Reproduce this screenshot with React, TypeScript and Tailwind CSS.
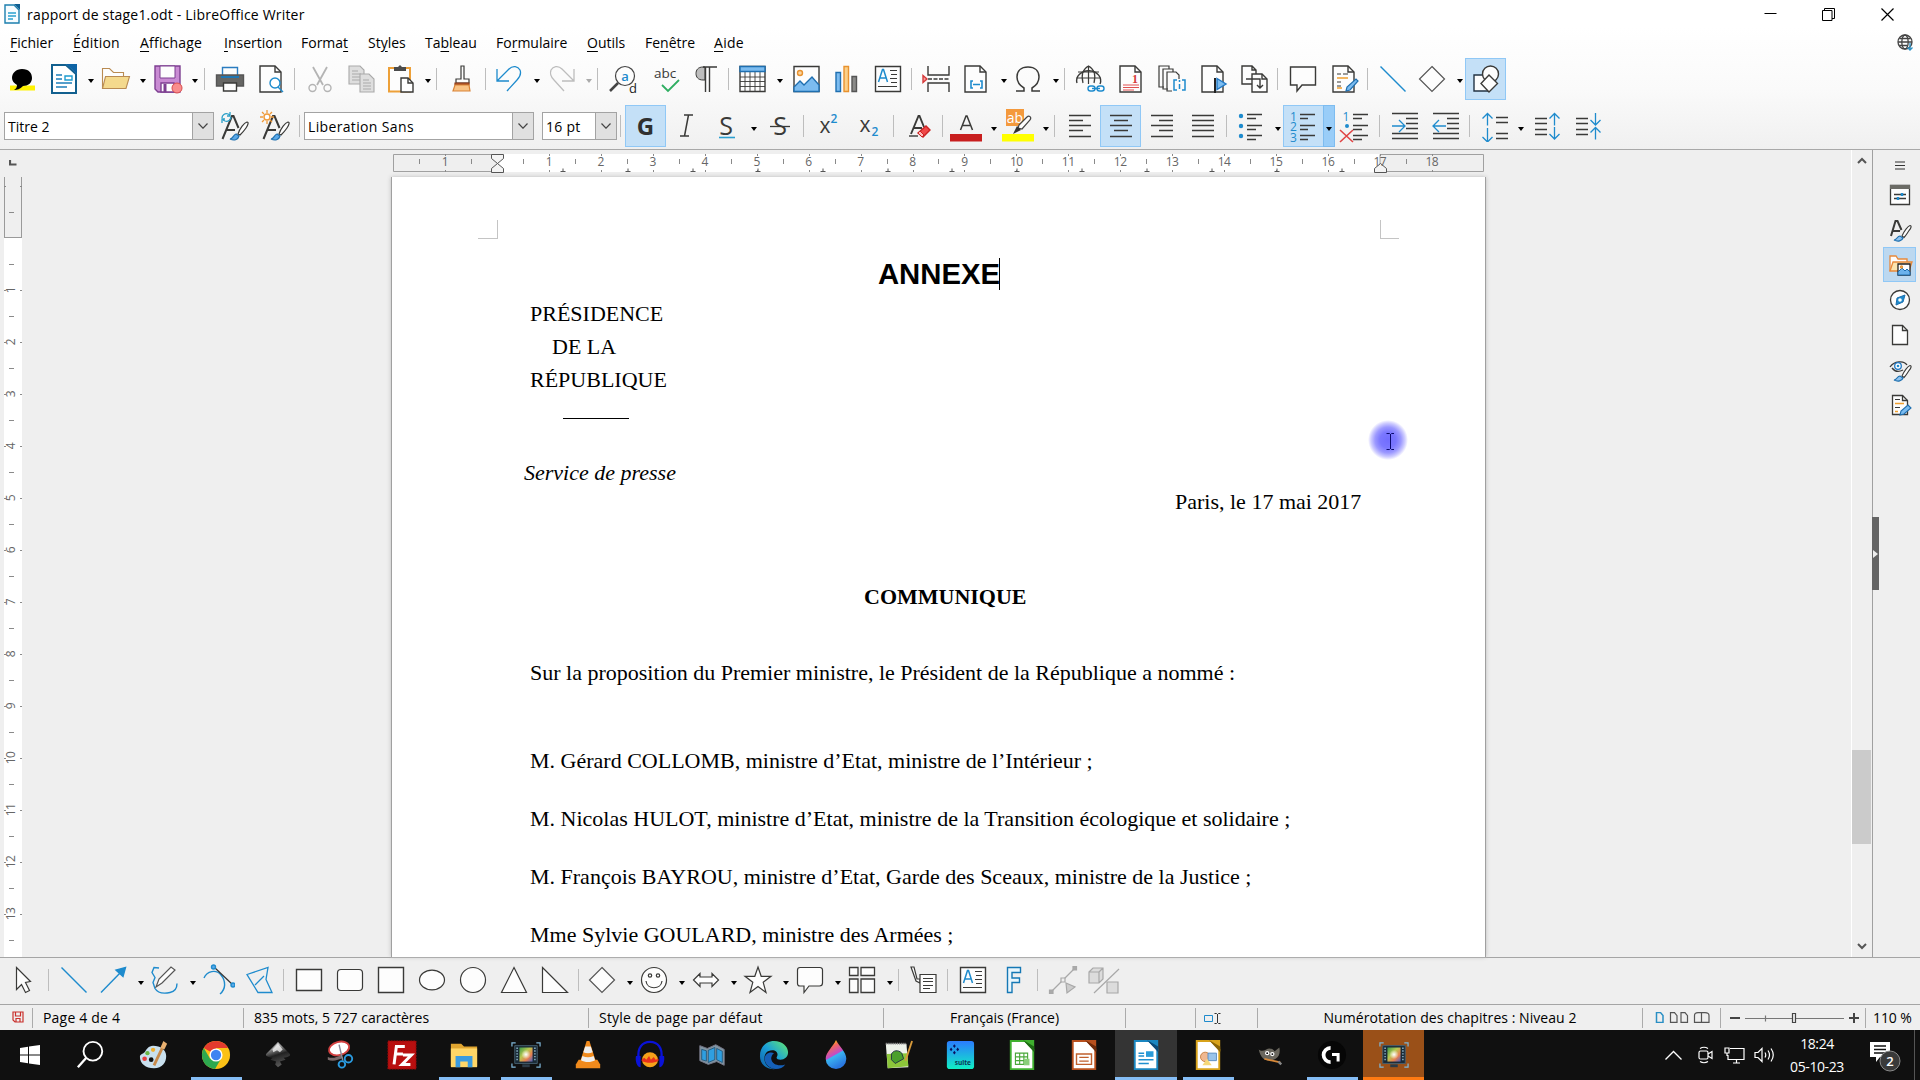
import React from "react";

type Kids = { children?: React.ReactNode };

const D = "#3a3a38";
const B = "#1e8bcd";
const G = "#b4b4b4";

function Ic({ children, c = D, w = 1.4, f = "none" }: Kids & { c?: string; w?: number; f?: string }) {
  return (
    <svg className="h-8 w-8 shrink-0" viewBox="0 0 32 32" fill={f} stroke={c} strokeWidth={w}>
      {children}
    </svg>
  );
}

/* `split` marks a button that is followed by its own dropdown arrow. */
function Btn({ children, on, split }: Kids & { on?: boolean; split?: boolean }) {
  return (
    <div
      className={
        on
          ? "flex h-[42px] w-[41px] shrink-0 items-center justify-center border border-[#90c8f6] bg-[#c4e0f7]"
          : split
            ? "flex h-[42px] w-[41px] shrink-0 items-center justify-center pr-[3px]"
            : "flex h-[42px] w-[41px] shrink-0 items-center justify-center"
      }
    >
      {children}
    </div>
  );
}

function Arr({ c = "#000", on }: { c?: string; on?: boolean }) {
  return (
    <div
      className={
        on
          ? "-ml-px flex h-[42px] w-[12px] shrink-0 items-center justify-center border border-[#7dbcf0] bg-[#99cdf8] pt-[5px]"
          : "flex h-[42px] w-[11px] shrink-0 items-center justify-center pt-[5px]"
      }
    >
      <svg className="h-[4px] w-[6px] shrink-0" viewBox="0 0 6 4">
        <path d="M0 0h6L3 4z" fill={c} />
      </svg>
    </div>
  );
}

function Sep({ wide }: { wide?: boolean }) {
  return (
    <div className={wide ? "flex w-[9px] shrink-0 justify-center" : "flex w-2 shrink-0 justify-center pr-px"}>
      <div className="h-[22px] w-px bg-[#bdbdbd]" />
    </div>
  );
}

/* ---------- shared icons ---------- */

const Sheet = ({ c = D }: { c?: string }) => (
  <>
    <path d="M5 3h15l6 6v20H5z" fill="#fdfdfd" stroke={c} />
    <path d="M20 3v6h6" stroke={c} fill="none" />
  </>
);

const BrushTip = () => (
  <>
    <path d="M18 22c2-5 6-10 8-10.500 2 0 1 3-1 5-2 3-3 5-5 7z" fill="#fdfdfd" stroke={D} strokeWidth={1.1} />
    <path d="M10 26c3 0 3-4 6-4l3 2c-1 3-5 4-9 2z" fill="#8fc3f0" stroke="#1d6fae" strokeWidth={1.2} />
  </>
);

const TextBoxIcon = () => (
  <Ic>
    <path d="M3.500 3.500h25v25h-25z" fill="#fdfdfd" />
    <path d="M6.500 19 10.500 6.500h1l4 12.500M8 15h6" stroke={B} strokeWidth={1.5} />
    <path d="M18 7.500h7M19 11.500h6M18 15.500h7M19 19.500h6M6 23.500h19" strokeWidth={1} />
  </Ic>
);

const DiamondIcon = () => (
  <Ic c="#555" w={1.2}>
    <path d="M16 3.500l12.500 12.500L16 28.500 3.500 16z" fill="#fdfdfd" />
  </Ic>
);

const LineIcon = () => (
  <Ic c={B} w={1.4}>
    <path d="M3.500 3.500l25 25" />
  </Ic>
);

/* ---------- title and menu ---------- */

function TitleBar() {
  return (
    <div className="flex h-[28px] items-center pl-1">
      <svg className="h-[20px] w-4" viewBox="0 0 16 20" fill="none" stroke="#1c7fae" strokeWidth={1.4}>
        <path d="M1 1h9l5 5v13H1z" fill="#f6fcff" />
        <path d="M10 0h6v6z" fill="#0e5f92" stroke="none" />
        <path d="M4 9h8M4 12h8M4 15h5" stroke="#2aa0d0" />
      </svg>
      <span className="ml-[7px] w-[500px] pt-px text-[14px] leading-5 tracking-[0.19px] text-black">rapport de stage1.odt - LibreOffice Writer</span>
      <div className="ml-auto flex items-center pr-[26px]">
        <svg className="mr-[45px] h-3 w-[13px]" viewBox="0 0 13 12" stroke="#000">
          <path d="M.5 5.500h12" />
        </svg>
        <svg className="mr-[46px] h-[13px] w-[13px]" viewBox="0 0 13 13" stroke="#000" fill="none">
          <path d="M.5 2.500h9.500v10H.5zM2.500 2.500v-2h10v10h-2.500" />
        </svg>
        <svg className="h-[13px] w-[13px]" viewBox="0 0 13 13" stroke="#000" strokeWidth={1.2}>
          <path d="M.5.5l12 12M12.500.5l-12 12" />
        </svg>
      </div>
    </div>
  );
}

function M({ a = "", u, b, cls }: { a?: string; u: string; b: string; cls: string }) {
  return (
    <span className={`${cls} shrink-0 whitespace-nowrap`}>
      {a}
      <span className="underline underline-offset-[3px]">{u}</span>
      {b}
    </span>
  );
}

function MenuBar() {
  return (
    <div className="flex h-[29px] items-center pl-[10px] text-[14px] leading-5 text-black">
      <M u="F" b="ichier" cls="w-[63px]" />
      <M u="É" b="dition" cls="w-[67px] tracking-[0.2px]" />
      <M u="A" b="ffichage" cls="w-[84px] tracking-[0.2px]" />
      <M u="I" b="nsertion" cls="w-[77px]" />
      <M a="Forma" u="t" b="" cls="w-[67px]" />
      <M a="St" u="y" b="les" cls="w-[57px]" />
      <M a="Ta" u="b" b="leau" cls="w-[71px]" />
      <M a="Fo" u="r" b="mulaire" cls="w-[91px]" />
      <M u="O" b="utils" cls="w-[58px]" />
      <M a="Fe" u="n" b="être" cls="w-[69px]" />
      <M u="A" b="ide" cls="w-[60px] tracking-[0.3px]" />
      <svg className="ml-auto mr-[6px] h-[17px] w-[17px]" viewBox="0 0 17 17" fill="none" stroke="#444" strokeWidth={1.3}>
        <circle cx="8" cy="8" r="7" />
        <ellipse cx="8" cy="8" rx="3.200" ry="7" />
        <path d="M1 8h14M2.500 4.500h11M2.500 11.500h8" />
        <path d="M13 9v7M10.500 13.500 13 16l2.500-2.500" stroke="#2a8fc4" />
      </svg>
    </div>
  );
}

/* ---------- standard toolbar ---------- */

function StandardBar() {
  return (
    <div className="flex h-[46px] items-center pl-px pb-[3px]">
      <Btn>
        <svg className="h-8 w-8" viewBox="0 0 32 32">
          <path d="M4 22.500h25v5H4z" fill="#fff200" />
          <path d="M16 6c7 0 10 4 10 9s-4 8-9 8c-3 3-6 4-9 4 2-1 3-3 3-5-3-2-5-4-5-7 0-5 4-9 10-9z" fill="#000" />
        </svg>
      </Btn>
      <div className="w-[2px]" />
      <Btn split>
        <Ic c="#12608f" w={2}>
          <path d="M5 2h14l10 9v19H5z" fill="#fff" />
          <path d="M19 1h11v10z" fill="#0d63a5" stroke="none" />
          <path d="M9 12h6M9 16h6M9 20h16M9 24h11" stroke="#1d7fbb" strokeWidth={1.5} />
          <path d="M18 13h7v4h-7z" stroke="#1d9cd0" strokeWidth={1.400} />
        </Ic>
      </Btn>
      <Arr />
      <Btn split>
        <Ic c="#b98b52" w={1.1}>
          <path d="M3.500 25V5.500h7l4 4h10V14" fill="#fdfdfd" />
          <path d="M6.500 13.500h24L27 25.500H3.500z" fill="#f4d98d" />
        </Ic>
      </Btn>
      <Arr />
      <Btn split>
        <Ic c="#7d3f91">
          <path d="M4 3h25v26H7l-3-3z" fill="#c98bd3" />
          <path d="M9 3h15v12H9z" fill="#fdfdfd" strokeWidth={1} />
          <path d="M10 20h13v9H10z" fill="#fdfdfd" />
          <path d="M14 21v8" strokeWidth={3} />
          <circle cx="26" cy="25" r="5" fill="#fa8d8d" stroke="#d84c4c" strokeWidth={1} />
        </Ic>
      </Btn>
      <Arr />
      <Sep wide />
      <Btn>
        <Ic>
          <path d="M8.500 12V4.500h15V12" fill="#fdfdfd" stroke="#2a7cc0" />
          <path d="M2.500 12h27v11h-27z" fill="#666664" stroke="#555" />
          <path d="M9.500 20h13v8h-13z" fill="#fdfdfd" />
          <path d="M7 14h18" stroke="#1f77b4" strokeWidth={2} />
        </Ic>
      </Btn>
      <Btn>
        <Ic>
          <Sheet />
          <circle cx="20" cy="20" r="5" stroke={B} fill="#fff" />
          <path d="M23 24l5 5" stroke={B} />
        </Ic>
      </Btn>
      <Sep />
      <Btn>
        <Ic c={G}>
          <path d="M9 4l10 18M23 4 13 22" strokeWidth={1.800} />
          <circle cx="8.500" cy="25" r="3.500" />
          <circle cx="23.500" cy="25" r="3.500" />
        </Ic>
      </Btn>
      <Btn>
        <Ic c="#a9a9a9" w={1.1}>
          <path d="M4 3h11l4 4v14H4z" fill="#dedede" />
          <path d="M7 8h6M7 11h9M7 14h9M7 17h9" />
          <path d="M15 11h9l5 5v13H15z" fill="#dedede" />
          <path d="M18 17h6M18 20h8M18 23h8M18 26h8" />
        </Ic>
      </Btn>
      <Btn split>
        <Ic>
          <path d="M5 5h21v23.500H5z" fill="#fdfdfd" stroke="#eda038" strokeWidth={2} />
          <path d="M10 4h4l2-2 2 2h4v4H10z" fill="#4b4b4b" stroke="none" />
          <path d="M17 15h7l5 5v9H17z" fill="#fff" />
          <path d="M24 15v5h5" />
        </Ic>
      </Btn>
      <Arr />
      <Sep />
      <Btn>
        <Ic w={1.2}>
          <path d="M15 3h3v13h5v4H10v-4h5z" fill="#fdfdfd" />
          <path d="M9 20h14v2H9z" fill="#b5562b" stroke="#8f3f1c" />
          <path d="M9 22h14l1 6H7z" fill="#f9c385" stroke="#d98336" />
        </Ic>
      </Btn>
      <Sep />
      <Btn split>
        <Ic c={B} w={1.3}>
          <path d="M4 6v12h12M4 18 16 6c4-4 9-2.500 11 1 1.500 4 0 7-3 10L14 28" />
        </Ic>
      </Btn>
      <Arr />
      <Btn split>
        <Ic c="#bdbdbd" w={1.3}>
          <path d="M29 6v12H17M29 18 17 6C13 2 8 3.500 6 7c-1.500 4 0 7 3 10l10 11" />
        </Ic>
      </Btn>
      <Arr c="#aaa" />
      <Sep />
      <Btn>
        <svg className="h-8 w-8 overflow-visible" viewBox="0 0 32 32" fill="none" stroke="#444" strokeWidth={1.5}>
          <circle cx="18" cy="13" r="9.500" fill="#fdfdfd" strokeWidth={1.200} />
          <path d="M11 20 3 28" strokeWidth={2.500} />
          <text x="18" y="17.500" textAnchor="middle" fontSize="13" fill={B} stroke="none" fontFamily="Open Sans" fontWeight="600">a</text>
          <text x="26" y="30" textAnchor="middle" fontSize="13" fill="#222" stroke="none" fontFamily="Open Sans">d</text>
        </svg>
      </Btn>
      <Btn>
        <svg className="h-8 w-8 overflow-visible" viewBox="0 0 32 32" fill="none">
          <text x="17" y="15" textAnchor="middle" fontSize="13.500" fill="#3a3a38" fontFamily="Open Sans">abc</text>
          <path d="M14 22l6 6L31 17" stroke="#2fae62" strokeWidth={1.800} />
        </svg>
      </Btn>
      <Btn>
        <Ic>
          <path d="M16 17h-2C9 17 7 14 7 10.500S9 4 14 4h2z" fill="#bdbdbd" strokeWidth={1} />
          <path d="M14 4h14M16.500 4v25M20.500 4v25" />
        </Ic>
      </Btn>
      <Sep />
      <Btn split>
        <Ic>
          <path d="M4 3.500h25v25H4z" fill="#fdfdfd" />
          <path d="M4 14h25M4 18.500h25M4 23.500h25M9 9v19M14 9v19M19 9v19M24 9v19" strokeWidth={0.9} />
          <path d="M4 3.500h25v5H4z" fill="#7cbcf0" stroke="#1f6fb0" />
        </Ic>
      </Btn>
      <Arr />
      <Btn>
        <Ic>
          <path d="M4 3.500h25v25H4z" fill="#fdfdfd" />
          <path d="M4 24l6-6 4 4 8-8 7 8v6.500H4z" fill="#7cbcf0" stroke="#1f6fb0" />
          <circle cx="10" cy="10" r="2.500" fill="#fbd5a0" stroke="#e8922f" />
        </Ic>
      </Btn>
      <Btn>
        <Ic>
          <path d="M5 9.500h4.500v19H5z" fill="#7cbcf0" stroke="#1f6fb0" />
          <path d="M13 3.500h4.500v25H13z" fill="#fbd08a" stroke="#e8922f" />
          <path d="M21 13.500h4.500v15H21z" fill="#8a8a88" stroke="#555" />
        </Ic>
      </Btn>
      <Btn>
        <TextBoxIcon />
      </Btn>
      <Sep />
      <Btn>
        <Ic>
          <path d="M7 3v9h21V3M7 29v-9h21v9" />
          <path d="M7 16h22" strokeDasharray="4 1.500" />
          <path d="M2 12.500l4 3.500-4 3.500z" fill="#f5a0a0" stroke="#d63a3a" />
        </Ic>
      </Btn>
      <Btn split>
        <Ic>
          <Sheet />
          <path d="M13 18h-2v7h2M20 18h2v7h-2M13 21.500h7" stroke={B} strokeWidth={1.600} />
        </Ic>
      </Btn>
      <Arr />
      <Btn split>
        <Ic w={1.500}>
          <path d="M4 28h8v-3C7 22 5 18 5 14 5 8 9 4 16 4s11 4 11 10c0 4-2 8-7 11v3h8" />
        </Ic>
      </Btn>
      <Arr />
      <Sep />
      <Btn>
        <Ic>
          <path d="M3 20a12 10 0 1 1 23 1" />
          <path d="M14.500 3v18M9 20C7 12 9 6 14.500 3 20 6 22 12 20 20M4 9h21M2.500 15h24" strokeWidth={1.200} />
          <rect x="14" y="23" width="7" height="5" rx="2.500" stroke={B} fill="#fdfdfd" />
          <rect x="23" y="23" width="7" height="5" rx="2.500" stroke={B} fill="#fdfdfd" />
          <path d="M18 25.500h8" stroke={B} />
        </Ic>
      </Btn>
      <Btn>
        <svg className="h-8 w-8 overflow-visible" viewBox="0 0 32 32" fill="none" stroke={D} strokeWidth={1.400}>
          <Sheet />
          <path d="M8 22h16M8 24.500h16M8 27h11" stroke="#e05050" strokeWidth={1} />
          <text x="20" y="20" textAnchor="middle" fontSize="12" fill="#d63a3a" stroke="none" fontFamily="Liberation Serif" fontWeight="700">1</text>
        </svg>
      </Btn>
      <Btn>
        <Ic w={1.200}>
          <path d="M8 24H3V3h10v3M12 26H7V6h10v3" />
          <path d="M16 28h-5V9h9l3 3v4" />
          <path d="M21 17h-3v10h3M26 17h3v10h-3M23.500 17v2M23.500 21v5" stroke={B} strokeWidth={1.500} />
        </Ic>
      </Btn>
      <Btn>
        <Ic>
          <Sheet />
          <path d="M18 15v15" strokeWidth={2} stroke="#222" />
          <path d="M20 15.500l9 5.500-9 5.500z" fill="#7cbcf0" stroke="#1f77c4" />
        </Ic>
      </Btn>
      <Btn>
        <Ic>
          <path d="M4 3h10l4 4v14H4zM14 3v4h4" fill="#fdfdfd" />
          <path d="M14 11h10l5 5v13H14z" fill="#fdfdfd" />
          <path d="M24 11v5h5" />
          <path d="M8 16h14v8M19 22l3 3 3-3" />
        </Ic>
      </Btn>
      <Sep />
      <Btn>
        <Ic>
          <path d="M3.500 4h25v18H15l-5 6v-6H3.500z" fill="#fdfdfd" />
        </Ic>
      </Btn>
      <Btn>
        <Ic>
          <Sheet />
          <path d="M9 11h4M15 11h5M9 19h4M9 23h4" strokeWidth={1.200} />
          <path d="M9 15h11M9 25h5" stroke="#f0a030" />
          <path d="M18 28l1-4 9-8 2 2-8 9z" fill="#7cbcf0" stroke="#1f6fb0" strokeWidth={1.200} />
        </Ic>
      </Btn>
      <Sep />
      <Btn>
        <LineIcon />
      </Btn>
      <Btn split>
        <DiamondIcon />
      </Btn>
      <Arr />
      <Btn on>
        <Ic>
          <path d="M4 12h15v16H4z" fill="#fdfdfd" stroke="#234" />
          <circle cx="20.500" cy="11" r="8" fill="#fdfdfd" />
          <path d="M19 12l8.500 8.500L19 29l-8-8.500z" fill="#fdfdfd" />
        </Ic>
      </Btn>
    </div>
  );
}

/* ---------- formatting toolbar ---------- */

function Combo({ text, cls }: { text: string; cls: string }) {
  return (
    <div className={`${cls} flex h-[28px] shrink-0 border border-[#a3a3a3] bg-white`}>
      <span className="flex-1 pl-[3px] text-[14px] leading-[27px] text-black">{text}</span>
      <div className="flex w-[21px] items-center justify-center border-l border-[#a3a3a3] bg-[#e0e0e0]">
        <svg className="h-[6px] w-[10px]" viewBox="0 0 10 6" fill="none" stroke="#444" strokeWidth={1.2}>
          <path d="M.5.5 5 5.200 9.500.5" />
        </svg>
      </div>
    </div>
  );
}

const StyleA = () => (
  <>
    <path d="M3.500 29 13 6h1.500l5 12M8 20h8" stroke={D} strokeWidth={2} fill="none" />
    <path d="M19 24c2-6 6-11 9-12 2 0 1 3-1 6-2 3-4 5-6 7z" fill="#fdfdfd" stroke={D} strokeWidth={1.200} />
    <path d="M11 29c3 0 3-4 6-5l3 2c-1 4-5 5-9 3z" fill="#5aa8e8" stroke="#1d6fae" strokeWidth={1.200} />
  </>
);

function FormatBar() {
  return (
    <div className="flex h-[46px] items-center pl-1">
      <Combo text="Titre 2" cls="w-[210px]" />
      <Btn>
        <Ic>
          <StyleA />
          <path d="M3 8c0-3 3-5 6-4l2 1M11 2v4H8M12 7c0 3-3 5-6 4l-2-1M3 13V9h3" stroke="#2a9fc8" strokeWidth={1.300} />
        </Ic>
      </Btn>
      <Btn>
        <Ic>
          <StyleA />
          <circle cx="7" cy="7" r="3" stroke="#ef9a38" fill="#fff" />
          <path d="M7 0v3M7 11v3M0 7h3M11 7h3M2 2l2 2M10 10l2 2M12 2l-2 2M4 10l-2 2" stroke="#ef9a38" strokeWidth={1.300} />
        </Ic>
      </Btn>
      <Sep />
      <Combo text="Liberation Sans" cls="w-[230px] tracking-[0.35px]" />
      <div className="w-2" />
      <Combo text="16 pt" cls="w-[75px] tracking-[0.25px]" />
      <Sep />
      <Btn on>
        <span className="font-['Open_Sans'] text-[24px] font-bold leading-8 text-[#303030]">G</span>
      </Btn>
      <Btn>
        <Ic w={1.500}>
          <path d="M13 5h9M9 26h9M17.500 5l-4 21" />
        </Ic>
      </Btn>
      <Btn split>
        <svg className="h-8 w-8 overflow-visible" viewBox="0 0 32 32">
          <text x="16" y="24.500" textAnchor="middle" fontSize="25" fill="#3a3a38" fontFamily="Open Sans">S</text>
          <path d="M9 27.500h16" stroke="#2a9fd0" strokeWidth={1.600} />
        </svg>
      </Btn>
      <Arr />
      <Btn>
        <svg className="h-8 w-8 overflow-visible" viewBox="0 0 32 32">
          <text x="16" y="25" textAnchor="middle" fontSize="25" fill="#3a3a38" fontFamily="Open Sans">S</text>
          <path d="M6 16.500h20" stroke="#3a3a38" strokeWidth={1.300} />
        </svg>
      </Btn>
      <Sep />
      <Btn>
        <svg className="h-8 w-8 overflow-visible" viewBox="0 0 32 32">
          <text x="12" y="23" textAnchor="middle" fontSize="21" fill="#3a3a38" fontFamily="Open Sans">x</text>
          <text x="21" y="13" textAnchor="middle" fontSize="12" fill={B} fontFamily="Open Sans" fontWeight="600">2</text>
        </svg>
      </Btn>
      <Btn>
        <svg className="h-8 w-8 overflow-visible" viewBox="0 0 32 32">
          <text x="11" y="22" textAnchor="middle" fontSize="21" fill="#3a3a38" fontFamily="Open Sans">x</text>
          <text x="21" y="26" textAnchor="middle" fontSize="12" fill={B} fontFamily="Open Sans" fontWeight="600">2</text>
        </svg>
      </Btn>
      <Sep />
      <Btn>
        <Ic>
          <path d="M8 24 15.500 6h1l4.500 11M11 18h8" strokeWidth={1.900} />
          <path d="M6 26h9" />
          <path d="M15 23l8-7 4 4-7 7z" fill="#f04848" stroke="#c22" />
          <path d="M15 23l2-2 4 4-2 2z" fill="#fbb" stroke="#c22" strokeWidth={1} />
        </Ic>
      </Btn>
      <Sep />
      <Btn split>
        <svg className="h-8 w-8" viewBox="0 0 32 32" fill="none">
          <path d="M10.500 20 16 6h1l5.500 14M12.500 15.500h8" stroke="#3a3a38" strokeWidth={1.500} />
          <path d="M0 24h32v7.500H0z" fill="#c81e1e" />
        </svg>
      </Btn>
      <Arr />
      <Btn split>
        <svg className="h-8 w-8 overflow-visible" viewBox="0 0 32 32" fill="none">
          <path d="M4 -1h18v17H4z" fill="#f4993c" />
          <text x="13" y="13" textAnchor="middle" fontSize="14" fill="#fff" fontFamily="Open Sans">ab</text>
          <path d="M17 15l8-8c2-2 5 0 3 3l-8 9-4-1z" fill="#fdfdfd" stroke="#444" strokeWidth={1.200} />
          <path d="M15 16l4 4-8 4z" fill="#333" />
          <path d="M0 24h32v7.500H0z" fill="#ffff00" />
        </svg>
      </Btn>
      <Arr />
      <Sep />
      <Btn>
        <Ic w={1.3}><path d="M5 5.500h22M5 10.500h14M5 15.500h22M5 20.500h14M5 26.500h22" /></Ic>
      </Btn>
      <Btn on>
        <Ic w={1.3}><path d="M5 5.500h22M9 10.500h14M5 15.500h22M9 20.500h14M5 26.500h22" /></Ic>
      </Btn>
      <Btn>
        <Ic w={1.3}><path d="M5 5.500h22M13 10.500h14M5 15.500h22M13 20.500h14M5 26.500h22" /></Ic>
      </Btn>
      <Btn>
        <Ic w={1.3}><path d="M5 5.500h22M5 10.500h22M5 15.500h22M5 20.500h22M5 26.500h22" /></Ic>
      </Btn>
      <Sep />
      <Btn split>
        <Ic w={1.3}>
          <path d="M13 4.500h15M13 8.500h9M13 15.500h15M13 19.500h9M13 25.500h15M13 29.500h9" />
          <g fill={B} stroke="none">
            <circle cx="7" cy="6" r="2.200" />
            <circle cx="7" cy="16" r="2.200" />
            <circle cx="7" cy="26" r="2.200" />
          </g>
        </Ic>
      </Btn>
      <Arr />
      <Btn on>
        <svg className="h-8 w-8 shrink-0 overflow-visible" viewBox="0 0 32 32">
          <path d="M12 4.500h15M12 8.500h8M12 15.500h15M12 19.500h8M12 25.500h15M12 29.500h8" stroke="#3a3a38" strokeWidth={1.300} />
          <g fontSize="12" fill={B} fontFamily="Open Sans" textAnchor="middle">
            <text x="5.500" y="10.500">1</text>
            <text x="5.500" y="21">2</text>
            <text x="5.500" y="31.500">3</text>
          </g>
        </svg>
      </Btn>
      <Arr on />
      <Btn>
        <svg className="h-8 w-8 overflow-visible" viewBox="0 0 32 32" fill="none">
          <path d="M13 4.500h15M13 8.500h9M13 15.500h15M13 19.500h9M13 25.500h15M13 29.500h9" stroke="#3a3a38" strokeWidth={1.300} />
          <text x="6" y="11" fontSize="12" fill={B} fontFamily="Open Sans" textAnchor="middle">1</text>
          <circle cx="7" cy="16" r="2" fill={B} />
          <path d="M0 20l13 12M13 20 0 32" stroke="#e04444" strokeWidth={1.600} />
        </svg>
      </Btn>
      <Sep />
      <Btn>
        <Ic w={1.300}>
          <path d="M3 3.500h26M17 8.500h12M17 13.500h12M17 18.500h12M3 23.500h26M3 28.500h26" />
          <path d="M3 16h13M10 10l6 6-6 6" stroke={B} />
        </Ic>
      </Btn>
      <Btn>
        <Ic w={1.300}>
          <path d="M3 3.500h26M17 8.500h12M17 13.500h12M17 18.500h12M3 23.500h26M3 28.500h26" />
          <path d="M3 16h13M9 10l-6 6 6 6" stroke={B} />
        </Ic>
      </Btn>
      <Sep />
      <Btn>
        <Ic w={1.3}>
          <path d="M17 7.500h12M17 12.500h12M17 23.500h12M17 28.500h12" />
          <path d="M8.500 3.500v12M3.500 8.500l5-5 5 5M8.500 18v14M3.500 27l5 5 5-5" stroke={B} />
        </Ic>
      </Btn>
      <Arr />
      <Btn>
        <Ic w={1.3}>
          <path d="M4 8.500h12M4 13.500h12M4 19.500h12M4 24.500h12" />
          <path d="M23.500 3.500v12M18.500 8.500l5-5 5 5M23.500 17v12M18.500 24l5 5 5-5" stroke={B} />
        </Ic>
      </Btn>
      <Btn>
        <Ic w={1.3}>
          <path d="M4 8.500h12M4 13.500h12M4 19.500h12M4 24.500h12" />
          <path d="M23.500 3v12M18.500 10l5 5 5-5M23.500 17.500v12M18.500 22.500l5-5 5 5" stroke={B} />
        </Ic>
      </Btn>
    </div>
  );
}

/* ---------- rulers ---------- */

const CM = 51.94;
const hMarks = Array.from({ length: 20 }, (_, i) => i - 1);
const vMarks = Array.from({ length: 14 }, (_, i) => i);

function HRuler() {
  const zero = 104;
  return (
    <div className="flex h-[27px] pt-1">
      <div className="w-[393px] shrink-0">
        <svg className="ml-[9px] mt-[6px] h-[6px] w-[8px]" viewBox="0 0 8 6">
          <path d="M1 0v4.500h6.500" fill="none" stroke="#555" strokeWidth={2.200} />
        </svg>
      </div>
      <div className="relative h-[19px] w-[1092px] shrink-0">
        <svg className="absolute inset-0 h-[19px] w-[1092px]" viewBox="0 0 1092 19" fill="none">
          <path d="M104 0h883v18H104z" fill="#fff" />
          <path d="M104 .5H.5v17H104M987 .5h103.500v17H987v-17" stroke="#a0a0a0" />
          {hMarks.map((n) => (
            <g key={n} stroke="#8a8a8a">
              {n !== 0 && <path d={`M${Math.round(zero + n * CM) + 0.5} 0v2m0 14v2`} />}
              <path d={`M${Math.round(zero + (n - 0.5) * CM) + 0.5} 5v5`} />
            </g>
          ))}
          {Array.from({ length: 13 }, (_, i) => i + 1).map((n) => (
            <path key={n} d={`M${Math.round(zero + n * 1.25 * CM) - 1.5} 17.500h5m-2.500 0v-3`} stroke="#555" />
          ))}
          <path d="M98.500.5h12v4l-6 5-6-5zM104.500 9.500l6 5v4h-12v-4z" fill="#f4f4f4" stroke="#555" />
          <path d="M987.500 9.500l6 5v4h-12v-4z" fill="#f4f4f4" stroke="#555" />
        </svg>
        <div className="relative flex h-[18px] pl-[26px]">
          {hMarks.map((n) => (
            <span key={n} className="w-[51.94px] shrink-0 text-center text-[12px] leading-[16px] tracking-[-0.5px] text-[#666]">
              {n === 0 || n === 19 ? "" : Math.abs(n)}
            </span>
          ))}
        </div>
      </div>
    </div>
  );
}

function VRuler() {
  return (
    <div className="relative ml-1 h-full w-[18px] shrink-0 overflow-hidden bg-white">
      <div className="h-[61px] border-x border-b border-[#9a9a9a] bg-[#efefef]" />
      <svg className="absolute left-0 top-0 h-[780px] w-[18px]" viewBox="0 0 18 780" stroke="#8a8a8a">
        <path d="M5 35.500h5M0 9.500h2m14 0h2" />
        {vMarks.map((n) => (
          <g key={n}>
            {n > 0 && <path d={`M0 ${61.5 + n * 52}h2m14 0h2`} />}
            <path d={`M5 ${87.5 + n * 52}h5`} />
          </g>
        ))}
      </svg>
      <div className="relative flex flex-col pt-[26px]">
        {vMarks.slice(1).map((n) => (
          <div key={n} className="flex h-[52px] w-[15px] items-center justify-center">
            <span className="-rotate-90 text-[12px] leading-3 tracking-[-0.5px] text-[#666]">{n}</span>
          </div>
        ))}
      </div>
    </div>
  );
}

/* ---------- document ---------- */

function Page() {
  return (
    <div className="relative h-full w-[1095px] shrink-0 overflow-hidden border-x border-[#a0a0a0] bg-white font-['Liberation_Serif'] text-[22px] leading-6 text-black shadow-[0_0_4px_#bbb]">
      <div className="flex h-[62px] items-end justify-between px-[86px]">
        <div className="h-[19px] w-[20px] border-b border-r border-[#c4c4c4]" />
        <div className="h-[19px] w-[19px] border-b border-l border-[#c4c4c4]" />
      </div>
      <div className="mt-[11px] flex h-[47px] items-center justify-center pl-[1px] font-['Liberation_Sans'] text-[29.3px] font-bold leading-[47px]">
        <span>ANNEXE</span>
        <span className="-ml-px h-8 w-px bg-black" />
      </div>
      <div className="pl-[138px]">
        <div className="leading-[33px]">PRÉSIDENCE</div>
        <div className="pl-[22px] leading-[33px]">DE LA</div>
        <div className="leading-[33px]">RÉPUBLIQUE</div>
        <div className="ml-[33px] mt-[22px] h-px w-[66px] bg-black" />
        <div className="-ml-[6px] mt-[42px] italic">Service de presse</div>
        <div className="mt-[5px] pl-[645px]">Paris, le 17 mai 2017</div>
        <div className="mt-[71px] pl-[334px] font-bold">COMMUNIQUE</div>
        <div className="mt-[52px]">Sur la proposition du Premier ministre, le Président de la République a nommé :</div>
        <div className="mt-16">M. Gérard COLLOMB, ministre d’Etat, ministre de l’Intérieur ;</div>
        <div className="mt-[34px]">M. Nicolas HULOT, ministre d’Etat, ministre de la Transition écologique et solidaire ;</div>
        <div className="mt-[34px]">M. François BAYROU, ministre d’Etat, Garde des Sceaux, ministre de la Justice ;</div>
        <div className="mt-[34px]">Mme Sylvie GOULARD, ministre des Armées ;</div>
      </div>
      <div className="absolute left-[976px] top-[243px] flex h-10 w-10 items-center justify-center rounded-full bg-[radial-gradient(circle_closest-side,#716dff_0%,#7b78ff_40%,#9c99ff_65%,#cfcdff_85%,#fff_100%)]">
        <svg className="ml-1 mt-[2px] h-[17px] w-[8px]" viewBox="0 0 8 17" fill="none" stroke="#0a0a70" strokeWidth={1}>
          <path d="M.5.500h3l1 1 1-1h3M.5 16.500h3l1-1 1 1h3M4.500 1v15" />
        </svg>
      </div>
    </div>
  );
}

function Chev({ down }: { down?: boolean }) {
  return (
    <svg className="h-[7px] w-[10px]" viewBox="0 0 10 7" fill="none" stroke="#555" strokeWidth={2}>
      <path d={down ? "M1 1l4 4 4-4" : "M1 6l4-4 4 4"} />
    </svg>
  );
}

function SideIcon({ children, on }: Kids & { on?: boolean }) {
  return (
    <div className={on ? "flex h-[35px] w-[33px] items-center justify-center border border-[#90c8f6] bg-[#bcd8f0]" : "flex h-[35px] w-[33px] items-center justify-center"}>
      <svg className="h-[24px] w-[24px] overflow-visible" viewBox="4 4 24 24" fill="none" stroke={D} strokeWidth={1.300}>
        {children}
      </svg>
    </div>
  );
}

function Sidebar() {
  return (
    <div className="relative flex w-[48px] shrink-0 flex-col items-center border-l border-[#a0a0a0] pl-[6px] pt-[4px]">
      <div className="flex h-[23px] items-center pb-px">
        <svg className="h-[9px] w-[10px]" viewBox="0 0 10 9" stroke="#333" strokeWidth={1.100}>
          <path d="M0 1h10M0 4.500h10M0 8h10" />
        </svg>
      </div>
      <SideIcon>
        <path d="M6.500 6.500h19v19h-19z" fill="#fdfdfd" />
        <path d="M6 6h20v4H6z" fill="#6b6b66" stroke="none" />
        <path d="M10 15.500h12M10 19.500h12" />
        <path d="M18 14v3M14 18v3" stroke={B} strokeWidth={2.500} />
      </SideIcon>
      <SideIcon>
        <path d="M7 22 11.500 7h2l4 9M9 17h7" strokeWidth={2} />
        <BrushTip />
      </SideIcon>
      <SideIcon on>
        <path d="M6 22V7h6l2 3h9v3" fill="#fdfdfd" stroke="#e8893a" />
        <path d="M9 13h19l-3 9H6z" fill="#fbe3ae" stroke="#e8893a" />
        <path d="M14 15h12v11H14z" fill="#fff" stroke="#222" />
        <path d="M14 23l4-4 3 3 2-2 3 3v3H14z" fill="#6cb2ec" stroke="#1f6fb0" strokeWidth={1} />
        <circle cx="17.500" cy="18" r="1" stroke="#e8922f" />
      </SideIcon>
      <SideIcon>
        <circle cx="16" cy="16" r="9.500" fill="#fdfdfd" />
        <path d="M21 11l-2 7-7 3 1-7z" fill={B} stroke="#1d6fae" strokeWidth={1} />
        <circle cx="16" cy="16" r="1.800" fill="#fff" stroke="none" />
      </SideIcon>
      <SideIcon>
        <path d="M8.500 6.500h10l5 5v14h-15z" fill="#fdfdfd" />
        <path d="M18.500 6.500v5h5" />
      </SideIcon>
      <SideIcon>
        <path d="M6 13c4-6 14-7 17-2M8 14c3 4 7 4 11 2" />
        <circle cx="14" cy="12" r="3.300" stroke="#1f77c4" fill="#fff" />
        <circle cx="14" cy="12" r="1.300" fill={B} stroke="none" />
        <BrushTip />
      </SideIcon>
      <SideIcon>
        <path d="M8.500 6.500h10l5 5v14h-15z" fill="#fdfdfd" />
        <path d="M18.500 6.500v5h5" />
        <path d="M11 10.500h5M11 18.500h5" strokeWidth={1} />
        <path d="M11 14.500h9M11 22.500h3" stroke="#f0a030" />
        <path d="M16 26l1-4 7-6 3 3-7 6z" fill="#7cbcf0" stroke="#1f6fb0" strokeWidth={1.100} />
      </SideIcon>
      <div className="absolute left-[-1px] top-[367px] flex h-[73px] w-[7px] items-center bg-[#646464]">
        <svg className="ml-[1px] h-2 w-[5px]" viewBox="0 0 5 8">
          <path d="M0 0l5 4-5 4z" fill="#eee" />
        </svg>
      </div>
    </div>
  );
}

/* ---------- drawing toolbar ---------- */

function DrawBar() {
  return (
    <div className="flex h-[47px] shrink-0 items-center border-t border-[#a5a5a5] bg-[#efefef] pb-[2px] pl-1">
      <Btn>
        <Ic w={1.200}>
          <path d="M7.500 3.500v22l5-5 4 8 4-2-4-8 5-1z" fill="#fdfdfd" />
        </Ic>
      </Btn>
      <Sep />
      <Btn><LineIcon /></Btn>
      <Btn split>
        <Ic c={B}>
          <path d="M4 28.500 24 8" />
          <path d="M28.500 3.500l-2.500 9L19 6z" fill={B} />
        </Ic>
      </Btn>
      <Arr />
      <Btn split>
        <Ic c={B}>
          <path d="M10 4 5 3.500l-2 5 3 5-2 5 2 6c3 5 10 5 15 4s7-5 7-9" />
          <path d="M7 23l3-8L22 3l4 3-13 13z" fill="#fdfdfd" stroke="#555" strokeWidth={1.200} />
        </Ic>
      </Btn>
      <Arr />
      <Btn>
        <Ic c={B}>
          <path d="M1 14c3-7 12-9 17-3s5 14-1 19" />
          <path d="M11 3l19 18" stroke="#333" strokeWidth={1.200} />
          <circle cx="10.500" cy="3" r="2" fill="#5aa8e8" />
          <circle cx="30" cy="21" r="2" fill="#5aa8e8" />
        </Ic>
      </Btn>
      <Btn>
        <Ic c={B} w={1.3}>
          <path d="M3 10.500 24 3.500l-2 12 6 13H14zM11 21l9-9" />
        </Ic>
      </Btn>
      <Sep />
      <Btn><Ic><path d="M3.500 5.500h25v21h-25z" fill="#fdfdfd" /></Ic></Btn>
      <Btn><Ic w={1.200}><rect x="3.500" y="5.500" width="25" height="21" rx="3.500" fill="#fdfdfd" /></Ic></Btn>
      <Btn><Ic><path d="M3.500 3.500h25v25h-25z" fill="#fdfdfd" /></Ic></Btn>
      <Btn><Ic w={1.200}><ellipse cx="16" cy="16" rx="12.500" ry="9.800" fill="#fdfdfd" /></Ic></Btn>
      <Btn><Ic w={1.200}><circle cx="16" cy="16" r="12.500" fill="#fdfdfd" /></Ic></Btn>
      <Btn><Ic w={1.200}><path d="M16 3.500 28.500 28.500h-25z" fill="#fdfdfd" /></Ic></Btn>
      <Btn><Ic w={1.200}><path d="M3.500 3.500v25h25z" fill="#fdfdfd" /></Ic></Btn>
      <Sep />
      <Btn split><DiamondIcon /></Btn>
      <Arr />
      <Btn split>
        <Ic w={1.200}>
          <circle cx="16" cy="16" r="12.500" fill="#fdfdfd" />
          <circle cx="12" cy="11.500" r="1.700" />
          <circle cx="20" cy="11.500" r="1.700" />
          <path d="M8 17c1 9 15 9 16 0" />
        </Ic>
      </Btn>
      <Arr />
      <Btn split>
        <Ic w={1.200}>
          <path d="M3.500 16l6.500-6.500v3.500h12V9.500l6.500 6.500-6.500 6.500V19H10v3.500z" fill="#fdfdfd" />
        </Ic>
      </Btn>
      <Arr />
      <Btn split>
        <Ic w={1.200}>
          <path d="M16 3l3.200 9.300H29l-7.800 6L24 28.500l-8-6-8 6 2.800-10.200L3 12.300h9.800z" fill="#fdfdfd" />
        </Ic>
      </Btn>
      <Arr />
      <Btn split>
        <Ic w={1.200}>
          <path d="M6 3.500h20a2.500 2.500 0 0 1 2.500 2.500v13a3 3 0 0 1-3 3H15l-5 6.500V22H6a2.500 2.500 0 0 1-2.500-2.500V6A2.500 2.500 0 0 1 6 3.500z" fill="#fdfdfd" />
        </Ic>
      </Btn>
      <Arr />
      <Btn split>
        <Ic w={1.300}>
          <path d="M3.500 3.500H12v8H3.500zM15 3.500h13.500v8H15zM3.500 15H12v13.500H3.500zM15 15h13.500v13.500H15z" fill="#fdfdfd" />
        </Ic>
      </Btn>
      <Arr />
      <Sep />
      <Btn>
        <Ic w={1.200}>
          <path d="M3 3h3l3 12h3v4L8 17z" fill="#fdfdfd" />
          <path d="M12 10.500h16v18H12z" fill="#fdfdfd" />
          <path d="M15 14.500h10M15 17.500h10M15 21.500h10M15 24.500h7" />
        </Ic>
      </Btn>
      <Sep />
      <Btn><TextBoxIcon /></Btn>
      <Btn>
        <Ic c="#1578b5" w={1.400}>
          <path d="M9.500 3.500h13v5H14v5.500h7.500v4.500H14v10H9.500z" fill="#e8f6fd" />
        </Ic>
      </Btn>
      <Sep />
      <Btn>
        <Ic c="#a8a8a8" w={1.200}>
          <path d="M4 28 28 4" />
          <path d="M2.500 26h3.500v3.500H2.500zM26 2.500h3.500V6H26z" fill="#aaa" />
          <path d="M14 14h4v4h-4z" fill="#eee" />
          <path d="M19 19l9 4-8 6z" fill="#ccc" />
        </Ic>
      </Btn>
      <Btn>
        <Ic c="#a8a8a8" w={1.200}>
          <path d="M1 8l4-4h10v11l-4 4H1zM1 8h10v11M11 8l4-4" fill="#dcdcdc" />
          <path d="M31 5 6 29" />
          <path d="M19 18h11v11H19z" fill="#dcdcdc" />
        </Ic>
      </Btn>
    </div>
  );
}

/* ---------- status bar ---------- */

function Cell({ children, cls }: Kids & { cls: string }) {
  return <div className={`${cls} flex h-5 shrink-0 items-center whitespace-nowrap border-r border-[#ababab]`}>{children}</div>;
}

function StatusBar() {
  return (
    <div className="flex h-[26px] shrink-0 items-center border-t border-[#a5a5a5] bg-[#efefef] pt-px text-[14px] leading-5 text-black">
      <Cell cls="w-[33px] pl-3">
        <svg className="-mt-[3px] h-3 w-3" viewBox="0 0 12 12" fill="none" stroke="#c9302c" strokeWidth={1.200}>
          <path d="M1 1h10v10H3L1 9zM3.500 1v4h5V1M4 11V7.500h4V11" />
        </svg>
      </Cell>
      <Cell cls="w-[211px] pl-[10px] tracking-[0.2px]">Page 4 de 4</Cell>
      <Cell cls="w-[345px] pl-[10px]">835 mots, 5 727 caractères</Cell>
      <Cell cls="w-[295px] pl-[10px] tracking-[0.22px]">Style de page par défaut</Cell>
      <Cell cls="w-[242px] justify-center tracking-[-0.05px]">Français (France)</Cell>
      <Cell cls="w-[70px]" />
      <Cell cls="w-[62px] pl-2">
        <svg className="h-[11px] w-[17px]" viewBox="0 0 17 11" fill="none">
          <path d="M.5 2.500h8v6h-8z" stroke={B} />
          <path d="M10.500.5h2l1 1 1-1h2M10.500 10.500h2l1-1 1 1h2M13.500 1v9" stroke="#333" />
        </svg>
      </Cell>
      <Cell cls="w-[385px] justify-center tracking-[0.05px]">Numérotation des chapitres : Niveau 2</Cell>
      <Cell cls="w-[78px] pl-[12px]">
        <svg className="-mt-px h-[11px] w-[56px]" viewBox="0 0 56 11" fill="none" stroke="#555" strokeWidth={1.200}>
          <path d="M1.500 .6h4l2.500 3v6.800H1.500z" stroke="#2a8fc4" strokeWidth={1.500} />
          <path d="M15.500 .6h4l2.500 3v6.800h-6.500zM26 .6h4l2.500 3v6.800H26zM46.500 10.400V.6H43q-3.500 0-3.500 3v6.800zM46.500.6H50q4 0 4 3v6.800h-7.500" />
        </svg>
      </Cell>
      <Cell cls="w-[145px] pl-[9px]">
        <svg className="h-[12px] w-[132px]" viewBox="0 0 132 12" stroke="#444" fill="none">
          <path d="M0 6h10M119 6h10M124 1v10" strokeWidth={2} />
          <path d="M15 6.500h99M35.500 3.500v6" stroke="#777" strokeWidth={1.200} />
          <path d="M62.500 1.500h3v9h-3z" fill="#eee" strokeWidth={1.200} />
        </svg>
      </Cell>
      <span className="pl-[7px] tracking-[-0.1px]">110 %</span>
    </div>
  );
}

/* ---------- taskbar ---------- */

function Task({ children, bar, on }: Kids & { bar?: boolean; on?: boolean }) {
  return (
    <div className={on ? "flex h-[50px] w-[62px] shrink-0 flex-col items-center bg-[#343434]" : "flex h-[50px] w-[62px] shrink-0 flex-col items-center"}>
      <div className="flex h-[47px] items-center pt-[3px]">
        <svg className="h-[30px] w-[30px] overflow-visible" viewBox="0 0 32 32" fill="none">
          {children}
        </svg>
      </div>
      {bar && <div className={on ? "h-[3px] w-full bg-[#85bdf5]" : "h-[3px] w-[51px] bg-[#85bdf5]"} />}
    </div>
  );
}

function LoDoc({ c, d, children }: Kids & { c: string; d: string }) {
  return (
    <>
      <path d="M4 1h15l9 9v21H4z" fill="#fff" stroke={c} strokeWidth={2} />
      <path d="M17 0h12v12z" fill={c} />
      <path d="M17 0l12 13V7z" fill={d} />
      {children}
    </>
  );
}

const Monitor = () => (
  <>
    <path d="M1 7V3h4M31 7V3h-4M1 25v4h4M31 25v4h-4" stroke="#7fb6d8" strokeWidth={1.300} />
    <path d="M4 6h24v19H4z" fill="#1a2a36" stroke="#45606f" />
    <path d="M9 8h14v15H9z" fill="url(#spectrum)" />
    <circle cx="16" cy="15.500" r="5" fill="url(#glow)" />
    <path d="M6.500 8v15M25.500 8v15" stroke="#9cc8e0" strokeWidth={1.400} strokeDasharray="1.500 1.500" />
    <path d="M12 26h8v3h-8z" fill="#2b3a46" />
  </>
);

function Defs() {
  return (
    <svg className="absolute h-0 w-0">
      <defs>
        <linearGradient id="spectrum" x1="0" y1="0" x2="1" y2="1">
          <stop offset="0" stopColor="#3a9a4a" />
          <stop offset=".4" stopColor="#b8c850" />
          <stop offset=".7" stopColor="#e88050" />
          <stop offset="1" stopColor="#4a60c0" />
        </linearGradient>
        <radialGradient id="glow">
          <stop offset="0" stopColor="#fff" />
          <stop offset="1" stopColor="#fff" stopOpacity="0" />
        </radialGradient>
        <linearGradient id="edge" x1="0" y1="1" x2="1" y2="0">
          <stop offset="0" stopColor="#0c59a4" />
          <stop offset=".5" stopColor="#1ba0d8" />
          <stop offset="1" stopColor="#66eb6e" />
        </linearGradient>
        <linearGradient id="drop" x1="0" y1="0" x2=".4" y2="1">
          <stop offset="0" stopColor="#ffd21c" />
          <stop offset=".22" stopColor="#f9a030" />
          <stop offset=".3" stopColor="#f4685c" />
          <stop offset=".58" stopColor="#c04cc8" />
          <stop offset=".62" stopColor="#3bb4f0" />
          <stop offset="1" stopColor="#2a78e0" />
        </linearGradient>
        <linearGradient id="suite" x1="0" y1="0" x2="0" y2="1">
          <stop offset="0" stopColor="#2b7bff" />
          <stop offset="1" stopColor="#10efc4" />
        </linearGradient>
        <linearGradient id="ink" x1="0" y1="0" x2=".3" y2="1">
          <stop offset="0" stopColor="#f4f4f4" />
          <stop offset=".35" stopColor="#888" />
          <stop offset=".6" stopColor="#222" />
          <stop offset="1" stopColor="#555" />
        </linearGradient>
      </defs>
    </svg>
  );
}

function Taskbar() {
  return (
    <div className="relative flex h-[50px] shrink-0 bg-[#101010]">
      <Defs />
      <div className="flex w-[60px] shrink-0 items-center justify-center">
        <svg className="h-5 w-5" viewBox="0 0 20 20" fill="#fff">
          <path d="M0 3l8-1.200v7.700H0zM9 1.600 20 0v9.500H9zM0 10.500h8v7.700L0 17zM9 10.500h11V20L9 18.400z" />
        </svg>
      </div>
      <Task>
        <circle cx="18" cy="12" r="10" stroke="#fff" strokeWidth={2} />
        <path d="M11 19 2 29" stroke="#fff" strokeWidth={2.500} />
      </Task>
      <div className="w-px shrink-0" />
      <Task>
        <path d="M15 6c8 0 14 4 14 11s-4 13-13 13C7 30 1 25 1 18c0-3 3-3 5-5 2-3 4-7 9-7z" fill="#c9e0ee" />
        <circle cx="6" cy="20" r="2.500" fill="#e84040" />
        <circle cx="9" cy="14" r="2.300" fill="#6cb845" />
        <circle cx="15" cy="10.500" r="2.300" fill="#f0b030" />
        <circle cx="13" cy="21" r="2.500" fill="#101010" />
        <path d="M16 27 26 6" stroke="#c98a4a" strokeWidth={3} />
        <path d="M23 8l3-7 4 3-3 6z" fill="#e8b070" />
      </Task>
      <Task bar>
        <circle cx="16" cy="16" r="15" fill="#fbc116" />
        <path d="M16 16 3 8.500A15 15 0 0 1 29 8.500H16z" fill="#e33b2e" />
        <path d="M16 16v0L9.500 19.700 3 8.500A15 15 0 0 0 15 31l6.500-11.300z" fill="#2da94f" />
        <circle cx="16" cy="16" r="7" fill="#fff" />
        <circle cx="16" cy="16" r="5.500" fill="#3f83f1" />
      </Task>
      <Task>
        <path d="M16 2 28 14c3 3-2 4-6 5l2 2-6 2 2 3-4 3-3-3 1-3-6-2 2-2c-4-1-9-2-6-5z" fill="url(#ink)" />
        <path d="M16 4l5 6-3 3-3-2-4 2-1-3z" fill="#fff" opacity=".7" />
      </Task>
      <Task>
        <ellipse cx="15" cy="9" rx="11" ry="7" transform="rotate(-15 15 9)" fill="#fff" stroke="#d24040" strokeWidth={2} />
        <path d="M3 18c4 2 9 1 14-2l2 3c-5 3-12 4-16 2z" fill="#7a6a6a" />
        <path d="M15 5l4 17" stroke="#889" strokeWidth={1.500} />
        <circle cx="18" cy="26" r="3.500" stroke="#2a9be0" strokeWidth={2} />
        <circle cx="25" cy="20" r="4" stroke="#2a9be0" strokeWidth={2} />
      </Task>
      <Task>
        <path d="M1 1h30v30H1z" fill="#b80f0f" stroke="#8e0b0b" strokeDasharray="2 1" />
        <path d="M7.500 26 10 7h9M9 15h8M17 16h9l-10 10h9" stroke="#fff" strokeWidth={3.200} />
      </Task>
      <Task bar>
        <path d="M2 4h11l3 3h14v21H2z" fill="#e0a530" />
        <path d="M2 9h28v20H2z" fill="#ffd667" />
        <path d="M7 29V17h18v12h-5v-6h-8v6z" fill="#3a9be0" />
      </Task>
      <Task bar>
        <Monitor />
      </Task>
      <Task>
        <path d="M3 26l3-5h20l3 5v4H3z" fill="#f08a1c" />
        <path d="M14.500 1h3L25 25c-3 3-15 3-18 0z" fill="#f08a1c" />
        <path d="M13 7h6l2 6c-3 1.500-7 1.500-10 0zM10 17c4 2 8 2 12 0l1.500 4.500c-4 2.500-11 2.500-15 0z" fill="#eee" />
      </Task>
      <Task>
        <path d="M4 20C2 8 8 2 16 2s14 6 12 18" stroke="#0a12d8" strokeWidth={2.500} />
        <path d="M1 17h5v12c-4 0-6-7-5-12zM31 17h-5v12c4 0 6-7 5-12z" fill="#0a12d8" />
        <ellipse cx="16" cy="21" rx="8.500" ry="8" fill="#f6a21a" />
        <path d="M7 21l3-2 2 2 3-4 2 4 3-3 2 3 3-1v2c-5 3-13 3-18 0z" fill="#e8301c" />
      </Task>
      <Task>
        <path d="M3 6l8 3 9-4 9 5v17l-8-4-9 3-9-4z" fill="#7f96a4" stroke="#778" />
        <path d="M5 10l5 1.500v11L5 21zM12 11l7-3v13l-7 3zM21 9l6 3v12l-6-3z" fill="#2f9fe0" stroke="#1d4a6a" strokeWidth={0.8} />
      </Task>
      <Task>
        <path d="M1 17C1 7 8 1 16 1c9 0 15 6 15 12 0 5-4 8-8 8-3 0-5-1-4-3 2-3 0-7-5-7-6 0-9 5-8 11 1 5 6 9 12 9C8 32 1 26 1 17z" fill="url(#edge)" />
        <path d="M6 20c0 6 6 11 12 11 4 0 8-2 10-5-6 2-14 1-15-6 0-2 1-5 3-6-5-2-10 1-10 6z" fill="#1560b8" />
      </Task>
      <Task>
        <path d="M16 0c3 6 11 13 11 20a11 11 0 0 1-22 0C5 13 13 7 16 0z" fill="url(#drop)" />
      </Task>
      <Task>
        <path d="M3 4h22l2 25-22 1z" fill="#eef2ea" />
        <path d="M4 15l22-1 1 14-22 2z" fill="#8cc63a" />
        <path d="M9 15c2-4 7-5 11-1l2 6-9 5-4-4z" fill="#4aa02c" stroke="#234" />
        <path d="M3 4h22" stroke="#999" strokeWidth={2} strokeDasharray="1 1" />
        <path d="M24 22 31 1" stroke="#d89a3a" strokeWidth={2} />
      </Task>
      <Task>
        <rect x="2" y="1" width="29" height="30" rx="3" fill="url(#suite)" />
        <path d="M10 4.500l1.500 2L10 8.500 8.500 6.500zM10 11.500l1.500 2-1.500 2-1.500-2zM6.500 8l1.500 2-1.500 2L5 10zM13.500 8l1.500 2-1.500 2-1.500-2z" fill="#0a1060" />
        <text x="19" y="27" textAnchor="middle" fontSize="7" fontWeight="700" fill="#083a50" fontFamily="Open Sans">suite</text>
      </Task>
      <Task>
        <LoDoc c="#3faf2f" d="#1d6a14">
          <path d="M9 14h13v12H9zM9 18h13M9 22h13M13.500 14v12M18 14v12" stroke="#4aa83a" strokeWidth={1.200} />
          <path d="M18 20h6v7h-6z" fill="#8ace7a" />
        </LoDoc>
      </Task>
      <Task>
        <LoDoc c="#b8501e" d="#6e2c0c">
          <path d="M8 15h16v11H8z" stroke="#c0602e" strokeWidth={1.500} />
          <path d="M11 18.500h10M11 22.500h10" stroke="#c0602e" strokeWidth={1.500} />
        </LoDoc>
      </Task>
      <Task bar on>
        <LoDoc c="#1a86c0" d="#0c4a78">
          <path d="M8 14h6M8 17h6M8 21h16M8 25h11" stroke="#1f8fcf" strokeWidth={1.600} />
          <path d="M16 12h8v6h-8z" fill="#2a9bd8" />
        </LoDoc>
      </Task>
      <Task bar>
        <LoDoc c="#d8a21a" d="#8a6408">
          <circle cx="13" cy="18" r="5" fill="#f0b890" stroke="#c88040" />
          <path d="M16 14h9v8h-9z" fill="#9ac4ea" stroke="#5a8cc0" />
          <path d="M15 20l5 7H10z" fill="#f6d878" />
        </LoDoc>
      </Task>
      <Task>
        <path d="M4 10c2 2 5 2 8 0 3-2 7-1 9 2l5-4c1 5 0 10-4 12-5 3-10 2-13 0-3-3-4-6-5-10z" fill="#6a675e" />
        <circle cx="13" cy="14" r="2.300" fill="#fff" />
        <circle cx="18.500" cy="15" r="2.300" fill="#fff" />
        <circle cx="13" cy="14" r="1" fill="#000" />
        <circle cx="18.500" cy="15" r="1" fill="#000" />
        <path d="M10 20c6 2 11 2 17 4" stroke="#d88a3a" strokeWidth={1.800} />
        <path d="M25 23l3 3" stroke="#888" strokeWidth={2.500} />
      </Task>
      <Task bar>
        <circle cx="16" cy="16" r="15" fill="#060606" />
        <path d="M14.500 8.500A7.500 7.500 0 0 0 14.500 23.500" stroke="#fff" strokeWidth={4} />
        <path d="M16 15.500h6.500V23" stroke="#fff" strokeWidth={3.200} />
      </Task>
      <div className="flex h-[50px] w-[61px] shrink-0 flex-col items-center bg-[#9a5018]">
        <div className="flex h-[47px] items-center pt-[3px]">
          <svg className="h-[30px] w-[30px]" viewBox="0 0 32 32" fill="none">
            <Monitor />
          </svg>
        </div>
        <div className="h-[3px] w-full bg-[#ff7a12]" />
      </div>
      <div className="ml-auto flex items-center text-white">
        <svg className="mr-4 h-[10px] w-[17px]" viewBox="0 0 17 10" fill="none" stroke="#fff" strokeWidth={1.300}>
          <path d="M.5 9.500l8-8 8 8" />
        </svg>
        <svg className="mr-[11px] h-[18px] w-[15px]" viewBox="0 0 15 18" fill="none" stroke="#fff" strokeWidth={1.200}>
          <rect x="1" y="5" width="9" height="8" rx="1.500" />
          <path d="M10 8l4-2.500v7L10 10M2 2.500q4-2.500 8 0M2 15.500q4 2.500 8 0" />
        </svg>
        <svg className="mr-[9px] h-[17px] w-[21px]" viewBox="0 0 21 17" fill="none" stroke="#fff" strokeWidth={1.200}>
          <path d="M6 1.500h14v11H4V8M9 16h7M12.500 12.500V16M1 1h4v5H1zM3 6v3" />
        </svg>
        <svg className="mr-[12px] h-4 w-[21px]" viewBox="0 0 21 16" fill="none" stroke="#fff" strokeWidth={1.200}>
          <path d="M1 5.500h3l4-4v13l-4-4H1zM11 5.500q1.500 2.500 0 5M14 3.500q3 4.500 0 9M17 1.500q4.500 6.500 0 13" />
        </svg>
        <div className="w-[60px] whitespace-nowrap text-center text-[14px] leading-[23px] tracking-[-0.4px]">
          <div>18:24</div>
          <div>05-10-23</div>
        </div>
        <div className="ml-[22px] flex h-[32px] w-[34px] pt-[2px]">
          <svg className="h-[32px] w-[34px]" viewBox="0 0 34 32">
            <path d="M1 1h20v15H11l-4 5v-5H1z" fill="#fff" />
            <path d="M5 5h12M5 8.500h12M5 12h12" stroke="#101010" strokeWidth={1.300} />
            <circle cx="21" cy="20" r="10" fill="#3a3a3a" stroke="#8a8a8a" />
            <text x="21" y="25" textAnchor="middle" fontSize="13" fill="#fff" fontFamily="Open Sans" fontWeight="600">2</text>
          </svg>
        </div>
        <div className="ml-[11px] mr-[5px] h-[50px] w-px bg-[#555]" />
      </div>
    </div>
  );
}

export default function App() {
  return (
    <div className="flex h-[1080px] w-[1920px] flex-col overflow-hidden bg-[#efefef] font-['Open_Sans',sans-serif]">
      <div className="flex h-[150px] shrink-0 flex-col border-b border-[#a8a8a8] bg-[linear-gradient(#fff_0%,#fff_18%,#fafafa_60%,#f0f0f0_100%)]">
        <TitleBar />
        <MenuBar />
        <StandardBar />
        <FormatBar />
      </div>
      <div className="flex h-[807px] shrink-0">
        <div className="flex w-[1851px] shrink-0 flex-col">
          <HRuler />
          <div className="flex min-h-0 flex-1">
            <VRuler />
            <div className="w-[369px] shrink-0" />
            <Page />
          </div>
        </div>
        <div className="flex w-[21px] shrink-0 flex-col items-center border-l border-white pr-px pt-[7px] pb-[7px]">
          <Chev />
          <div className="mt-[586px] h-[94px] w-[19px] shrink-0 bg-[#cbcbcb]" />
          <div className="mt-auto">
            <Chev down />
          </div>
        </div>
        <Sidebar />
      </div>
      <DrawBar />
      <StatusBar />
      <Taskbar />
    </div>
  );
}
